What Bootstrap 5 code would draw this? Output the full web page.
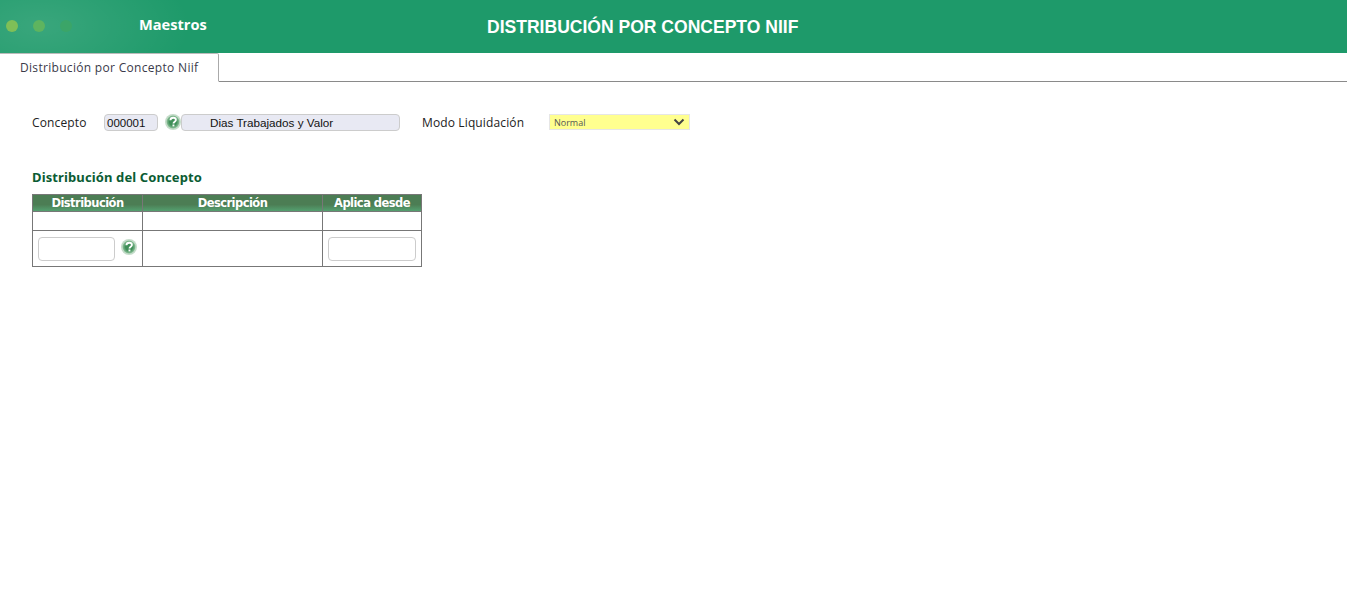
<!DOCTYPE html>
<html lang="es">
<head>
<meta charset="utf-8">
<title>Distribución por Concepto NIIF</title>
<link href="https://cdn.jsdelivr.net/npm/bootstrap@5.3.0/dist/css/bootstrap.min.css" rel="stylesheet">
<style>
html,body{background:#fff;overflow:hidden}
body{font-family:"Open Sans","Noto Sans",sans-serif;font-size:12px;color:#222;letter-spacing:.13px}
.top-band{height:53px;background:#1e9a6a;background-image:radial-gradient(ellipse 150px 75px at 40px 26px,rgba(255,255,255,.12),rgba(255,255,255,0))}
.dots-area{width:139px;padding-left:6px;gap:15px;margin-top:-2px}
.dot-lamp{width:12px;height:12px;border-radius:50%;background:#7fbf57}
.dot-lamp.d2{background:#5eb45f}
.dot-lamp.d3{background:#3ba568}
.menu-name{font-family:"Open Sans",sans-serif;font-weight:700;font-size:14.6px;color:#fff;width:348px;letter-spacing:0;margin-top:-4px}
.page-title{font-family:"Liberation Sans",sans-serif;font-weight:700;font-size:17.55px;color:#fff;letter-spacing:0;margin-top:2px}
.tab-strip{height:29px;border-bottom:1px solid #8a8a8a}
.tab-one{width:219px;height:29px;background:#fff;border:1px solid #aaa;border-top-color:#bbb;border-left:0;border-bottom:1px solid #fff;border-radius:0 2px 0 0;font-size:12px;color:#3a3a4a;padding-top:5px;padding-left:20px;letter-spacing:.31px}
.form-zone{padding:31px 0 0 32px}
.field-row{height:19px}
.lbl-concepto{width:72px}
.code-box{width:54px;height:17px;background:#e8e9f3;border:1px solid #ccc;border-radius:4px;font-family:"Liberation Sans",sans-serif;font-size:11.5px;line-height:17px;padding-left:2px;color:#111;letter-spacing:0}
.help-ico{width:16px;height:16px;display:block}
.help-first{margin-left:7px;margin-bottom:2px}
.help-second{margin-left:6px;margin-bottom:3px}
.name-box{width:219px;height:17px;background:#e8e9f3;border:1px solid #ccc;border-radius:4px;font-family:"Liberation Sans",sans-serif;font-size:11.7px;line-height:15px;padding-left:28px;color:#111;letter-spacing:0}
.lbl-modo{width:127px;margin-left:22px}
.select-modo{width:141px;height:16px;background:#ffff8f;border:1px solid #e6e6e6;font-size:9px;line-height:14px;padding-left:4px;padding-top:1px;color:#555;font-family:"Open Sans",sans-serif;letter-spacing:0;margin-top:-1px}
.select-modo svg{margin-top:-1px}
.section-head{font-family:"Noto Sans","Open Sans",sans-serif;font-weight:700;font-size:13px;color:#0b5c33;margin-top:36px;height:18px;line-height:18px;letter-spacing:.12px}
.grid-tbl{width:390px;margin-top:8px;border-collapse:separate;border-spacing:0;table-layout:fixed;border-top:1px solid #777;border-left:1px solid #777}
.grid-tbl th,.grid-tbl td{border-right:1px solid #777;border-bottom:1px solid #777;padding:0}
.grid-tbl th{height:17px;padding-top:1px;background:linear-gradient(#4c7d54 0,#4c7d54 60%,#54a070 100%);color:#fff;font-family:"DejaVu Sans",sans-serif;font-size:11.5px;font-weight:700;text-align:center;line-height:15px;letter-spacing:-.55px}
.row-empty td{height:19px}
.row-input td{height:36px}
.empty-input{height:24px;background:#fff;border:1px solid #ccc;border-radius:4px}
.ei-one{width:77px;margin-left:5px}
.ei-two{width:88px;margin-left:5px}
</style>
</head>
<body>
<div class="top-band d-flex align-items-center">
  <div class="dots-area d-flex align-items-center">
    <span class="dot-lamp"></span><span class="dot-lamp d2"></span><span class="dot-lamp d3"></span>
  </div>
  <div class="menu-name">Maestros</div>
  <div class="page-title">DISTRIBUCIÓN POR CONCEPTO NIIF</div>
</div>
<div class="tab-strip">
  <div class="tab-one">Distribución por Concepto Niif</div>
</div>
<div class="form-zone">
  <div class="field-row d-flex align-items-center">
    <span class="lbl-concepto">Concepto</span>
    <span class="code-box">000001</span>
    <svg class="help-ico help-first" viewBox="0 0 16 16"><defs><radialGradient id="hg"><stop offset="0.55" stop-color="#3f8f58"/><stop offset="1" stop-color="#8dc09a"/></radialGradient></defs><circle cx="8" cy="8" r="8" fill="#c4dcc9"/><circle cx="8" cy="8" r="6.4" fill="url(#hg)"/><path d="M5.4 6.2c.1-1.7 1.4-2.5 2.8-2.5 1.6 0 2.7.9 2.7 2.2 0 1.8-2.4 1.8-2.4 3.5" fill="none" stroke="#fff" stroke-width="1.9"/><rect x="7.5" y="10.5" width="1.9" height="1.9" fill="#fff"/></svg>
    <span class="name-box">Dias Trabajados y Valor</span>
    <span class="lbl-modo">Modo Liquidación</span>
    <div class="select-modo d-flex justify-content-between align-items-center">
      <span>Normal</span>
      <svg width="12" height="8" viewBox="0 0 12 8" class="me-1"><path d="M1.5 1.5 6 6l4.5-4.5" fill="none" stroke="#444" stroke-width="2"/></svg>
    </div>
  </div>
  <div class="section-head">Distribución del Concepto</div>
  <table class="grid-tbl">
    <colgroup><col style="width:110px"><col style="width:180px"><col style="width:99px"></colgroup>
    <thead><tr><th>Distribución</th><th>Descripción</th><th>Aplica desde</th></tr></thead>
    <tbody>
      <tr class="row-empty"><td></td><td></td><td></td></tr>
      <tr class="row-input">
        <td><div class="d-flex align-items-center"><div class="empty-input ei-one"></div>
          <svg class="help-ico help-second" viewBox="0 0 16 16"><circle cx="8" cy="8" r="8" fill="#c4dcc9"/><circle cx="8" cy="8" r="6.4" fill="url(#hg)"/><path d="M5.4 6.2c.1-1.7 1.4-2.5 2.8-2.5 1.6 0 2.7.9 2.7 2.2 0 1.8-2.4 1.8-2.4 3.5" fill="none" stroke="#fff" stroke-width="1.9"/><rect x="7.5" y="10.5" width="1.9" height="1.9" fill="#fff"/></svg></div></td>
        <td></td>
        <td><div class="empty-input ei-two"></div></td>
      </tr>
    </tbody>
  </table>
</div>
<script src="https://cdn.jsdelivr.net/npm/bootstrap@5.3.0/dist/js/bootstrap.bundle.min.js"></script>
</body>
</html>
